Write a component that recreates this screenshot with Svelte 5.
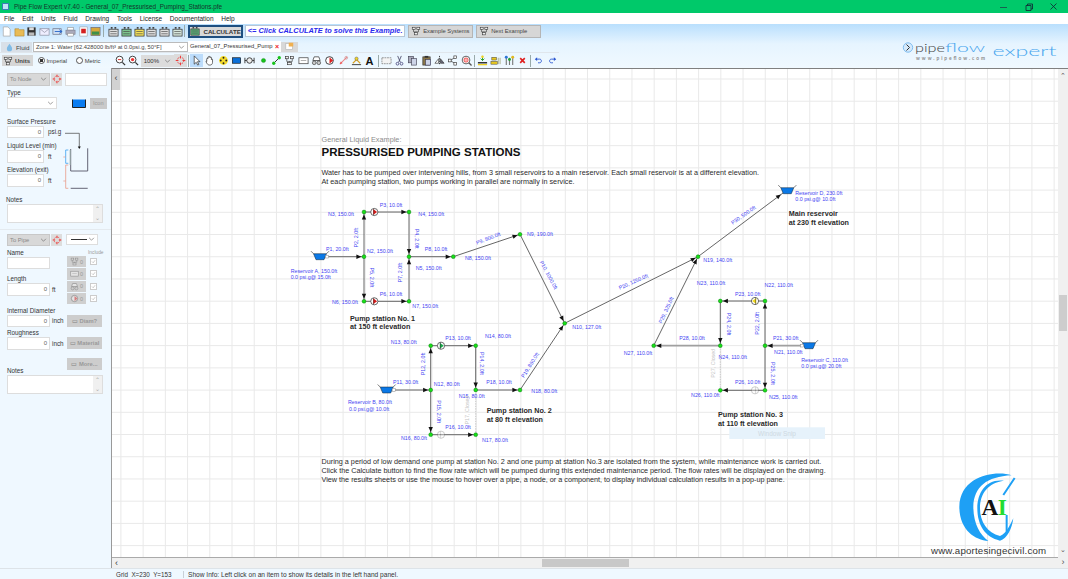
<script>
  const I = {
    page: '<path d="M2.5 1h5l2.5 2.5V11h-7.5z" fill="#fff" stroke="#aaa" stroke-width=".8"/>',
    open: '<path d="M1 3h4l1 1h5v7H1z" fill="#e9bb55" stroke="#a9802c" stroke-width=".6"/>',
    save: '<rect x="1.5" y="1.5" width="9" height="9" fill="#333"/><rect x="3.5" y="1.5" width="5" height="3" fill="#ddd"/><rect x="3" y="7" width="6" height="3.5" fill="#bbb"/>',
    mail: '<rect x="1" y="3" width="10" height="7" fill="#eef" stroke="#889" stroke-width=".7"/><path d="M1 3l5 4 5-4" fill="none" stroke="#889" stroke-width=".7"/>',
    imp: '<rect x="1" y="3" width="9" height="6" fill="#cfe0f5" stroke="#667" stroke-width=".7"/><path d="M3 6h8M8 4l3 2-3 2" fill="none" stroke="#2a66c8"/>',
    print: '<rect x="3" y="1.5" width="6" height="3" fill="#fff" stroke="#888" stroke-width=".6"/><rect x="1" y="4.5" width="10" height="4.5" fill="#aab" stroke="#778" stroke-width=".6"/><rect x="3" y="8" width="6" height="3" fill="#fff" stroke="#888" stroke-width=".6"/>',
    pdf: '<rect x="2" y="1" width="8" height="10" fill="#fff" stroke="#999" stroke-width=".6"/><rect x="3.5" y="3" width="5" height="5" fill="#d42020"/>',
    pic: '<rect x="1" y="1.5" width="10" height="9" fill="#d8a83a" stroke="#667" stroke-width=".7"/><rect x="2" y="6" width="8" height="3.5" fill="#3e8f4a"/>',
    zout: '<circle cx="5" cy="5" r="3.7" fill="#fff" stroke="#333"/><path d="M3.2 5h3.6" stroke="#d22"/><path d="M8 8l3 3" stroke="#333" stroke-width="1.4"/>',
    zin: '<circle cx="5" cy="5" r="3.7" fill="#fff" stroke="#333"/><circle cx="5" cy="5" r="1.8" fill="#e33"/><path d="M8 8l3 3" stroke="#333" stroke-width="1.4"/>',
    cross: '<circle cx="6" cy="6" r="3.6" fill="none" stroke="#e33" stroke-dasharray="1.6 1"/><path d="M6 .8v3M6 8.2v3M.8 6h3M8.2 6h3" stroke="#e33"/>',
    arrow: '<path d="M3.5 1v9l2.2-2 1.6 3 1.3-.7-1.6-3h2.8z" fill="#fff" stroke="#222" stroke-width=".7"/>',
    hand: '<path d="M3 7V4.2c0-1 1.2-1 1.2 0V2.6c0-1 1.3-1 1.3 0v-.3c0-1 1.3-1 1.3 0v.6c0-1 1.3-1 1.3 0V5c0-1 1.2-1 1.2 0v3c0 2-1.3 3-3 3-2 0-2.7-1-4-3.4-.4-.9.6-1.3 1-.6z" fill="#fff" stroke="#222" stroke-width=".7"/>',
    hub: '<circle cx="6" cy="6" r="4.8" fill="#f5dc2a"/><circle cx="6" cy="3" r="1" fill="#222"/><circle cx="6" cy="9" r="1" fill="#222"/><circle cx="3" cy="6" r="1" fill="#222"/><circle cx="9" cy="6" r="1" fill="#222"/>',
    tank: '<rect x="1.5" y="3" width="9" height="6" fill="#0a6fd8" stroke="#111" stroke-width=".7"/>',
    valve: '<circle cx="6" cy="6" r="3" fill="#eee" stroke="#333"/><path d="M1 3v6M11 3v6M1 6h2M9 6h2" stroke="#333"/>',
    dot: '<circle cx="6" cy="6" r="2.3" fill="#16c21a" stroke="#0a7a10" stroke-width=".4"/>',
    pipe: '<path d="M3 9l6-6" stroke="#222"/><circle cx="3" cy="9" r="1.8" fill="#16c21a"/><circle cx="9" cy="3" r="1.8" fill="#16c21a"/>',
    grid: '<rect x="1.5" y="1.5" width="3.5" height="2.6" fill="#eee" stroke="#333" stroke-width=".7"/><rect x="7" y="1.5" width="3.5" height="2.6" fill="#eee" stroke="#333" stroke-width=".7"/><path d="M3 4v3h6V4M6 7v1" stroke="#333" stroke-width=".7" fill="none"/><rect x="4" y="8" width="4" height="2.6" fill="#eee" stroke="#333" stroke-width=".7"/>',
    box: '<rect x="1" y="3" width="10" height="6.5" fill="#fff" stroke="#444" stroke-width=".8"/><path d="M3 6h6" stroke="#888" stroke-width=".7"/>',
    car: '<path d="M3.5 2h5l1.5 4H2z" fill="#fff" stroke="#333" stroke-width=".8"/><circle cx="3.5" cy="8.5" r="2" fill="#ccc" stroke="#333" stroke-width=".7"/><circle cx="8.5" cy="8.5" r="2" fill="#ccc" stroke="#333" stroke-width=".7"/>',
    pump: '<circle cx="6" cy="6" r="4.2" fill="#fff" stroke="#222" stroke-width=".9"/><path d="M6 2.5L10 6 6 9.5z" fill="#d22"/>',
    off: '<path d="M2 10l8-8" stroke="#e88" stroke-width="1.2"/><path d="M2 10l3-1-2-2z" fill="#e55"/><circle cx="9" cy="3" r="1.5" fill="none" stroke="#c88" stroke-width=".7"/>',
    fork: '<path d="M2 9l4-4 4 4" fill="none" stroke="#d8a020" stroke-width="1.2"/><circle cx="6" cy="4" r="1.8" fill="#f2d52c" stroke="#555" stroke-width=".5"/><path d="M1 10.5h10" stroke="#333"/>',
    text: '<text x="6" y="10.5" text-anchor="middle" font-family="Liberation Sans" font-weight="700" font-size="12" fill="#111">A</text>',
    marq: '<rect x="1" y="3" width="10" height="6.5" fill="#f3f3f3" stroke="#777" stroke-width=".8" stroke-dasharray="2 .8"/>',
    cut: '<path d="M4 1l3 7M8 1L5 8" stroke="#446" stroke-width=".9"/><circle cx="3.8" cy="9.5" r="1.5" fill="none" stroke="#558"/><circle cx="8.2" cy="9.5" r="1.5" fill="none" stroke="#558"/>',
    copy: '<rect x="1.5" y="1.5" width="5.5" height="7" fill="#aab" stroke="#445" stroke-width=".7"/><rect x="5" y="4" width="5.5" height="7" fill="#cdd4e8" stroke="#445" stroke-width=".7"/>',
    paste: '<rect x="2" y="2" width="8" height="9" fill="#8a7648" stroke="#333" stroke-width=".7"/><rect x="4" y="1" width="4" height="2" fill="#333"/><rect x="5" y="5" width="5.5" height="6" fill="#cdd4e8" stroke="#335" stroke-width=".6"/>',
    flip: '<path d="M6 1v10" stroke="#333" stroke-dasharray="1.5 1"/><path d="M5 4L1 9h4z" fill="#fff" stroke="#333" stroke-width=".7"/><path d="M7 4l4 5H7z" fill="#667" stroke="#333" stroke-width=".7"/>',
    rot: '<path d="M9 2.5L3.5 6 9 9.5" fill="none" stroke="#555" stroke-width=".9"/><rect x="7.5" y="1" width="3" height="3" fill="#fff" stroke="#333" stroke-width=".7"/><rect x="1.5" y="4.5" width="3" height="3" fill="#fff" stroke="#333" stroke-width=".7"/><rect x="7.5" y="8" width="3" height="3" fill="#fff" stroke="#333" stroke-width=".7"/>',
    find: '<circle cx="5.5" cy="5.5" r="4.2" fill="#fff" stroke="#555"/><circle cx="5.5" cy="5.5" r="2.2" fill="none" stroke="#e33"/><circle cx="5.5" cy="5.5" r=".8" fill="#e33"/><path d="M8.5 8.5l3 3" stroke="#555" stroke-width="1.4"/>',
    lift: '<path d="M1 8.5h10" stroke="#111" stroke-width="1.4"/><path d="M1 10.5h10" stroke="#f0d020" stroke-width="1.4"/><path d="M6 1v5M4 4l2 2 2-2" stroke="#1b9a20" fill="none"/><circle cx="6" cy="2" r="1.4" fill="#f0d020"/>',
    bars: '<rect x="1" y="7" width="7" height="3" fill="#e8c820" stroke="#333" stroke-width=".5"/><rect x="2" y="2.5" width="5" height="3" fill="#e8c820" stroke="#333" stroke-width=".5"/><path d="M9 3v7M11 3v7" stroke="#996" stroke-width=".8"/>',
    tree: '<path d="M2.5 3v8M6 3v8M9.5 3v8" stroke="#777" stroke-width="1.2"/><circle cx="2.5" cy="2.5" r="1.6" fill="#2d76d8"/><circle cx="6" cy="5" r="1.6" fill="#20a030"/><circle cx="9.5" cy="2.5" r="1.6" fill="#e0b820"/>',
    del: '<path d="M3.500 3.500l5 5M8.500 3.500l-5 5" stroke="#e02020" stroke-width="1.800"/>',
    undo: '<path d="M3 4.500h4.200c2.600 0 2.600 4 0 4H5.500" fill="none" stroke="#2a55d0" stroke-width="1"/><path d="M4.500 2.500L2 4.500 4.500 6.500z" fill="#2a55d0"/>',
    redo: '<path d="M9 4.500H4.800c-2.600 0-2.600 4 0 4h1.700" fill="none" stroke="#2a55d0" stroke-width="1"/><path d="M7.500 2.500L10 4.500 7.500 6.500z" fill="#2a55d0"/>'
  };
  const sheet = (c) => `<rect x="1" y="3.500" width="10" height="7.500" fill="${c}" stroke="#333" stroke-width=".8"/><path d="M2.500 6h7M2.500 8.500h7" stroke="#444" stroke-width=".7"/><path d="M3 1h2v2H3zM7 1h2v2H7z" fill="#444"/>`;
  const fileIcons = ['page','open','save','mail','imp','print','pdf','pic'];
  const sheets = ['#dedede','#7cc48e','#f3e05a','#dedede','#dedede','#d6e6dc'];
  const toolsA = ['arrow','hand','hub','tank','valve','dot','pipe','grid','box','car','pump','off','fork','text'];
  const toolsB = ['marq','cut','copy','paste','flip','rot','find'];
  const toolsC = ['lift','bars','tree','del'];
  const menus = ['File','Edit','Units','Fluid','Drawing','Tools','License','Documentation','Help'];

  const gridX = Array.from({ length: 43 }, (_, i) => 120.9 + i * 22.22);
  const gridY = Array.from({ length: 22 }, (_, i) => 79 + i * 22.22);

  const n = {
    N2:[364,256.7],N3:[364,212],N4:[409,212],N5:[409,256.7],N6:[364,301.3],N7:[409,301.3],N8:[453.3,256.7],N9:[520,234.3],N10:[564.7,323.3],
    N12:[430.7,390],N13:[430.7,345.7],N14:[475.7,345.7],N15:[475.7,390],N16:[430.7,434.7],N17:[475.7,434.7],N18:[520,390],
    N19:[698,256.7],N21:[765,345.7],N22:[765,301],N23:[720.3,301],N24:[720.3,345.7],N25:[765,390.3],N26:[720.3,390.3],N27:[653.7,345.7]
  };
  const RA=[326,256.7], RB=[393,390], RC=[802,345.7], RD=[783,193];
  const pipes = [
    [RA,n.N2,1],[n.N2,n.N3,0],[n.N3,n.N4,0],[n.N4,n.N5,1],[n.N2,n.N6,0],[n.N6,n.N7,0],[n.N7,n.N5,1],[n.N5,n.N8,1],[n.N8,n.N9,0],[n.N9,n.N10,0],
    [RB,n.N12,0],[n.N12,n.N13,0],[n.N13,n.N14,1],[n.N14,n.N15,0],[n.N12,n.N16,0],[n.N16,n.N17,1],[n.N15,n.N18,0],[n.N18,n.N10,0],
    [n.N10,n.N19,0],[n.N27,n.N19,0],[n.N19,RD,0],
    [RC,n.N21,2],[n.N21,n.N22,0],[n.N22,n.N23,0],[n.N23,n.N24,0],[n.N21,n.N25,0],[n.N25,n.N26,0],[n.N24,n.N27,2]
  ];
  const arrows = pipes.map(([a,b]) => {
    const ang = Math.atan2(b[1]-a[1], b[0]-a[0]);
    return { x: b[0]-Math.cos(ang)*2.6, y: b[1]-Math.sin(ang)*2.6, deg: ang*180/Math.PI };
  });
  const closed = [[n.N17,n.N15],[n.N26,n.N24]];
  const pumps = [
    [374.3,212,'#d81818',0,1],[374.3,301.3,'#d81818',0,1],[441,345.7,'#18a848',0,1],[755,301,'#f2d814',180,1],
    [441,434.7,'#eee',0,.35],[755,390.3,'#eee',180,.35]
  ];
  const tanks = [[320,256.7,1],[386.7,390,1],[809,345.7,-1],[787.3,190.7,0]];

  const labels = [
    ['N3, 150.0ft',341,214],['N4, 150.0ft',431.3,214.3],['P3, 10.0ft',391,204.7],['P2, 2.0ft',355.7,237.7,-90],['N2, 150.0ft',380,251],
    ['P4, 2.0ft',417,238.7,90],['P1, 20.0ft',337.3,249],['P8, 10.0ft',436,249],['P9, 800.0ft',488.3,238.3,-21],['N9, 190.0ft',540,234.3],
    ['N8, 150.0ft',478,258],['N5, 150.0ft',428.7,268],['P7, 2.0ft',399.7,272.7,-90],['P5, 2.0ft',372,277.3,90],['N6, 150.0ft',345,301.7],
    ['P6, 10.0ft',391,293.7],['N7, 150.0ft',425.3,305.7],['P10, 1000.0ft',548.7,275,62],['N10, 127.0ft',586.7,327],
    ['N13, 80.0ft',403.7,342.3],['P13, 10.0ft',458,338.3],['N14, 80.0ft',498,336],['P12, 2.0ft',423.3,364,-90],['P14, 2.0ft',482.3,363.3,90],
    ['P11, 30.0ft',405.7,382.3],['N12, 80.0ft',446.7,384],['P18, 10.0ft',499,382.3],['N18, 80.0ft',544.3,390.7],['P19, 860.0ft',530,365,-58],
    ['N15, 80.0ft',471.7,396.3],['P15, 2.0ft',439.3,411.7,90],['N16, 80.0ft',414,438.3],['P16, 10.0ft',458,427],['N17, 80.0ft',495,440.3],
    ['P30, 500.0ft',743.3,215,-35],['N19, 140.0ft',717.7,260.3],['P20, 1250.0ft',633.3,281.7,-24],['P29, 325.0ft',666,310,-65],
    ['N23, 110.0ft',711,283.3],['N22, 110.0ft',778.7,285],['P23, 10.0ft',747.7,293.7],['P24, 2.0ft',729,324,90],['P22, 2.0ft',757.3,323.3,-90],
    ['P28, 10.0ft',692,338],['P21, 30.0ft',785.7,338],['N21, 110.0ft',788.3,351.7],['N27, 110.0ft',638,353.3],['N24, 110.0ft',732.7,356.7],
    ['P25, 2.0ft',773.3,373.3,90],['P26, 10.0ft',747.7,382.3],['N26, 110.0ft',705.3,395],['N25, 110.0ft',783.3,396.7]
  ];
  const left = [
    ['Reservoir A, 150.0ft',290.7,270.7],['0.0 psi.g@ 15.0ft',290.7,277],
    ['Reservoir B, 80.0ft',348,402.3],['0.0 psi.g@ 10.0ft',349,408.7],
    ['Reservoir C, 110.0ft',801.3,360],['0.0 psi.g@ 20.0ft',801.3,366],
    ['Reservoir D, 230.0ft',795.3,193],['0.0 psi.g@ 10.0ft',795.3,199.3]
  ];
  const heads = [
    ['Pump station No. 1',350,320.7],['at 150 ft elevation',350,329.3],
    ['Pump station No. 2',486.7,412.7],['at 80 ft elevation',486.7,421.7],
    ['Pump station No. 3',718,416.7],['at 110 ft elevation',718,425.7],
    ['Main reservoir',788.7,216],['at 230 ft elevation',788.7,225]
  ];
  const prose = [
    ['Water has to be pumped over intervening hills, from 3 small reservoirs to a main reservoir. Each small reservoir is at a different elevation.',175],
    ['At each pumping station, two pumps working in parallel are normally in service.',184],
    ['During a period of low demand one pump at station No. 2 and one pump at station No.3 are isolated from the system, while maintenance work is carried out.',464.3],
    ['Click the Calculate button to find the flow rate which will be pumped during this extended maintenance period. The flow rates will be displayed on the drawing.',473],
    ['View the results sheets or use the mouse to hover over a pipe, a node, or a component, to display individual calculation results in a pop-up pane.',481.7]
  ];
  const includeRows = ['grid','box','car','pump'];
</script>

{#snippet icon(name, cls = '')}
  <span class="ic {cls}"><svg viewBox="0 0 12 12" width="11" height="11">{@html I[name]}</svg></span>
{/snippet}
{#snippet field(width, unit)}
  <div class="frow">
    <div class="inp" style="width:{width}px">0</div>
    <span class={width > 40 ? 'unit close' : 'unit'}>{unit}</span>
  </div>
{/snippet}
{#snippet chev()}
  <svg class="chev" viewBox="0 0 8 5" width="7" height="4"><path d="M1 1l3 3 3-3" fill="none" stroke="#666" stroke-width=".8"/></svg>
{/snippet}
{#snippet crossBtn()}
  <span class="crossbtn"><svg viewBox="0 0 12 12" width="10" height="10">{@html I.cross}</svg></span>
{/snippet}
{#snippet notes()}
  <div class="notes">
    <div class="nscroll"><span>⌃</span><span>⌄</span></div>
  </div>
{/snippet}

<div class="app">
  <header class="title">
    <span class="appicon"></span>
    <span class="ttext">Pipe Flow Expert v7.40 - General_07_Pressurised_Pumping_Stations.pfe</span>
    <span class="win">
      <svg viewBox="0 0 10 10" width="10" height="10"><path d="M1 5.500h7" stroke="#234" stroke-width=".7"/></svg>
      <svg viewBox="0 0 10 10" width="10" height="10"><path d="M2 3.500h5v5H2zM3.500 3.500V2h5v5H7" fill="none" stroke="#123" stroke-width=".8"/></svg>
      <svg viewBox="0 0 10 10" width="10" height="10"><path d="M1.500 1.500l6 6M7.500 1.500l-6 6" stroke="#123" stroke-width=".8"/></svg>
    </span>
  </header>
  <nav class="menu">{#each menus as m}<span>{m}</span>{/each}</nav>

  <div class="bars">
    <div class="r1">
      {#each fileIcons as f}{@render icon(f)}{/each}
      <i class="sep first"></i>
      {#each sheets as c}<span class="ic"><svg viewBox="0 0 12 12" width="11" height="11">{@html sheet(c)}</svg></span>{/each}
      <i class="sep"></i>
      <div class="calc"><svg viewBox="0 0 12 12" width="10" height="10">{@html sheet('#5cb07a')}</svg><b>CALCULATE</b></div>
      <div class="hint">&lt;= Click CALCULATE to solve this Example.</div>
      <div class="gbtn wide"><svg viewBox="0 0 12 12" width="10" height="10">{@html I.grid}</svg>Example Systems</div>
      <div class="gbtn"><svg viewBox="0 0 12 12" width="10" height="10">{@html I.grid}</svg>Next Example</div>
    </div>
    <div class="r2">
      <div class="fluid"><svg viewBox="0 0 12 12" width="9" height="9"><path d="M6 1c2 3 3.500 4.500 3.500 6.500a3.500 3.500 0 0 1-7 0C2.500 5.500 4 4 6 1z" fill="#7fbbe6"/></svg>Fluid</div>
      <div class="zone"><span>Zone 1: Water [62.428000 lb/ft³ at 0.0psi.g, 50°F]</span>{@render chev()}</div>
      <div class="tab"><span>General_07_Pressurised_Pump</span><em>×</em></div>
      <div class="tab2"><svg viewBox="0 0 12 12" width="9" height="9"><rect x="1" y="2" width="9" height="8" fill="#fff" stroke="#bbb"/><rect x="5" y="1" width="6" height="5" fill="#f0b050"/></svg></div>
    </div>
    <div class="r3">
      <div class="unitzone">
        <div class="units"><svg viewBox="0 0 12 12" width="10" height="10">{@html I.grid}</svg>Units</div>
        <span class="radio on"></span><span class="rl">Imperial</span>
        <span class="radio metric"></span><span class="rl">Metric</span>
      </div>
      {@render icon('zout')}{@render icon('zin')}
      <div class="pct"><span>100%</span>{@render chev()}</div>
      {@render icon('cross','graybg')}
      <i class="sep"></i>
      {#each toolsA as t, i}{@render icon(t, i === 0 ? 'active' : '')}{/each}
      <i class="sep"></i>
      {#each toolsB as t}{@render icon(t)}{/each}
      <i class="sep"></i>
      {#each toolsC as t}{@render icon(t)}{/each}
      <i class="sep"></i>
      {@render icon('undo')}{@render icon('redo')}
    </div>
    <svg class="logo" viewBox="0 0 160 30" width="160" height="30">
      <circle cx="8" cy="9.500" r="4.700" fill="#d4e9fb" stroke="#7fbdf0" stroke-width="1"/>
      <path d="M6.500 6.500l3 3-3 3" fill="none" stroke="#333" stroke-width="1"/>
      <text x="15" y="13.500" font-size="11" font-weight="300" fill="#444" textLength="30" lengthAdjust="spacingAndGlyphs">pipe</text>
      <text x="45" y="13.500" font-size="11" font-weight="300" fill="#49a6ee" textLength="40" lengthAdjust="spacingAndGlyphs">flow</text>
      <text x="16" y="21.500" font-size="4.800" font-weight="700" fill="#8a8a8a" textLength="69" lengthAdjust="spacing">www.pipeflow.com</text>
      <text x="92.500" y="18" font-size="14" font-weight="300" fill="#49a6ee" textLength="64" lengthAdjust="spacingAndGlyphs">expert</text>
    </svg>
  </div>

  <div class="main">
    <aside class="side">
      <div class="r top">
        <div class="sel gray w43"><span>To Node</span>{@render chev()}</div>
        {@render crossBtn()}
        <div class="blank"></div>
      </div>
      <div class="lbl m3">Type</div>
      <div class="r h12">
        <div class="sel w50">{@render chev()}</div>
        <svg class="tankic" viewBox="0 0 14 9" width="14" height="9"><path d="M.5.500v8h13v-8" fill="#0a7cf0" stroke="#222"/></svg>
        <div class="iconbtn">Icon</div>
      </div>
      <div class="lbl m9">Surface Pressure</div>
      {@render field(37,'psi.g')}
      <div class="lbl m5">Liquid Level (min)</div>
      {@render field(37,'ft')}
      <div class="lbl m4">Elevation (exit)</div>
      {@render field(37,'ft')}
      <div class="lbl m8 shift">Notes</div>
      {@render notes()}
      <hr />
      <div class="r top2">
        <div class="sel gray w43"><span>To Pipe</span>{@render chev()}</div>
        {@render crossBtn()}
        <div class="sel linesel"><i></i>{@render chev()}</div>
      </div>
      <div class="cols">
        <div class="lc">
          <div class="lbl tight">Name</div>
          <div class="inp w43 solo"></div>
          <div class="lbl gapL">Length</div>
          {@render field(43,'ft')}
        </div>
        <div class="rc">
          <div class="incl">Include</div>
          {#each includeRows as k}
            <div class="incrow">
              <span class="incbtn"><svg viewBox="0 0 12 12" width="9" height="9" opacity=".45">{@html I[k]}</svg><small>0</small></span>
              <span class="chk"><svg viewBox="0 0 8 8" width="7" height="7"><path d="M1.500 4l2 2 3-4" fill="none" stroke="#999" stroke-width=".8"/></svg></span>
            </div>
          {/each}
        </div>
      </div>
      <div class="lbl m1">Internal Diameter</div>
      <div class="frow btnrow">
        <div class="inp w43">0</div><span class="unit close">inch</span>
        <div class="graybtn">▭ Diam?</div>
      </div>
      <div class="lbl m2">Roughness</div>
      <div class="frow btnrow">
        <div class="inp w43">0</div><span class="unit close">inch</span>
        <div class="graybtn">▭ Material</div>
      </div>
      <div class="morerow"><div class="graybtn">▭ More...</div></div>
      <div class="lbl notes2">Notes</div>
      {@render notes()}
      <svg class="schem" viewBox="0 0 30 60" width="30" height="60">
        <path d="M5 3.300h14.300V18" fill="none" stroke="#444" stroke-width=".7"/>
        <path d="M17.800 16.500h3L19.300 19z" fill="#111"/>
        <path d="M10.700 19v22h17V18.300" fill="none" stroke="#556" stroke-width=".9"/>
        <path d="M10.200 20v15" stroke="#9aa" stroke-width="1"/>
        <path d="M8.300 20H5.700v13.300h2.600" fill="none" stroke="#3aa0f0" stroke-width=".8"/>
        <path d="M8.300 35H5.700v23.300h2.600" fill="none" stroke="#e89a88" stroke-width=".8"/>
        <path d="M10.700 58.300h17" stroke="#556" stroke-width=".9"/>
        <path d="M3.300 27h2.400M3.300 51h2.400" stroke="#e89a88" stroke-width=".7"/>
      </svg>
    </aside>

    <section class="work">
      <div class="cwrap">
        <svg class="canvas" viewBox="112 69 946 488" width="946" height="488">
          {#each gridX as x}<line class="g" x1={x} y1="69" x2={x} y2="557" />{/each}
          {#each gridY as y}<line class="g" x1="112" y1={y} x2="1058" y2={y} />{/each}

          {#each prose as p}<text class="prose" x="321.500" y={p[1]}>{p[0]}</text>{/each}
          <text class="kicker" x="321.500" y="141.500">General Liquid Example:</text>
          <text class="head" x="321.500" y="155.500">PRESSURISED PUMPING STATIONS</text>

          {#each closed as c}<line class="closed" x1={c[0][0]} y1={c[0][1]} x2={c[1][0]} y2={c[1][1]} />{/each}
          {#each pipes as p}<line class={p[2] === 2 ? 'pipe big' : p[2] === 1 ? 'pipe mid' : 'pipe'} x1={p[0][0]} y1={p[0][1]} x2={p[1][0]} y2={p[1][1]} />{/each}
          {#each arrows as a}<polygon class="arr" points="-5,-2.200 0,0 -5,2.200" transform="translate({a.x} {a.y}) rotate({a.deg})" />{/each}
          {#each Object.values(n) as p}<circle class="node" cx={p[0]} cy={p[1]} r="1.900" />{/each}

          {#each pumps as p}
            <g transform="translate({p[0]} {p[1]}) rotate({p[3]})" opacity={p[4]}>
              <circle r="3.600" fill="#fff" stroke="#333" stroke-width=".7" />
              <path d="M-1.200-3L2.800 0-1.200 3z" fill={p[2]} />
              <path d="M-.6-3.500V3.500" stroke="#333" stroke-width=".5" />
            </g>
          {/each}
          {#each tanks as t}
            <g transform="translate({t[0]} {t[1]})">
              <path d="M-6.500-3H6.500L4 3H-4z" fill="#0a78e6" stroke="#123" stroke-width=".5" />
              <path d="M-9-5.500L-6.500-3M9-5.500L6.500-3" stroke="#222" stroke-width=".6" />
              {#if t[2] !== 0}
                <rect x={t[2] > 0 ? 5.500 : -8.500} y="-1.300" width="3" height="2.600" fill="#fff" stroke="#888" stroke-width=".5" />
              {/if}
            </g>
          {/each}

          {#each labels as l}
            <text class="lab mid" transform="translate({l[1]} {l[2]}) rotate({l[3] ?? 0})" dy="1.900">{l[0]}</text>
          {/each}
          {#each left as l}<text class="lab" x={l[1]} y={l[2]} dy="1.900">{l[0]}</text>{/each}
          <text class="lab mid closedt" transform="translate(467.300 410) rotate(-90)" dy="1.900">P17, Closed</text>
          <text class="lab mid closedt" transform="translate(712.700 363.300) rotate(-90)" dy="1.900">P27, Closed</text>
          {#each heads as h}<text class="hd" x={h[1]} y={h[2]}>{h[0]}</text>{/each}

          <rect x="729.300" y="427.300" width="95.700" height="11.700" fill="#e6f2fb" />
          <text class="snip" x="777" y="435.500">Window Snip</text>

          <g transform="translate(900 450) scale(.3333)">
            <path fill="#1ea0f5" d="M335 76C290 60 180 75 178 170C178 240 225 270 265 273C240 255 220 220 220 170C222 110 260 80 335 76Z" />
            <path fill="#1ea0f5" d="M312 92C260 85 232 125 232 175C232 225 255 262 300 272C322 266 336 235 340 205C330 225 320 250 300 258C262 250 240 215 240 175C240 130 265 98 312 92Z" />
            <path fill="none" stroke="#1ea0f5" stroke-width="6" d="M344 84L310 135M320 195V245" />
            <text class="wa" x="270" y="195">A</text>
            <text class="wi" x="307" y="195">I</text>
          </g>
          <text class="wurl" x="931" y="554">www.aportesingecivil.com</text>
        </svg>
        <div class="collapse">‹</div>
      </div>
      <div class="vscroll"><span>⌃</span><i></i><span>⌄</span></div>
      <div class="hscroll"><span>‹</span><i></i></div>
      <div class="corner">›</div>
    </section>
  </div>

  <footer class="status">
    <span class="s1">Grid&nbsp; X=230&nbsp; Y=153</span>
    <span class="s2">Show Info: Left click on an item to show its details in the left hand panel.</span>
  </footer>
</div>

<style>
  :global(body) { margin: 0; background: #fff; overflow: hidden; }
  .app { width: 1068px; height: 579px; display: flex; flex-direction: column; font-family: "Liberation Sans", Arial, sans-serif; color: #222; position: relative; overflow: hidden; }
  .title { height: 13px; background: #00c96a; display: flex; align-items: center; font-size: 6.400px; color: #16352a; flex: none; }
  .appicon { width: 7px; height: 7px; margin: 0 5px 0 2px; background: #bfe3f7; border: 1px solid #3b7fb4; box-sizing: border-box; flex: none; }
  .win { margin-left: auto; display: flex; gap: 15px; padding-right: 9px; }
  .menu { height: 11px; display: flex; gap: 7.700px; padding-left: 4px; font-size: 6.500px; align-items: center; flex: none; color: #222; background: #fff; }
  .bars { height: 44px; flex: none; background: linear-gradient(#b9dffd, #e6f4ff 45%, #f0f9ff); position: relative; }
  .ic { width: 13.330px; height: 13px; flex: none; display: flex; align-items: center; justify-content: center; }
  .sep { width: 1px; height: 12px; margin: 0 1px; background: #9aa; flex: none; }
  .r1 { height: 14px; display: flex; align-items: center; }
  .r1 .ic { width: 12.800px; }
  .r1 .sep { margin: 0 3.200px 0 .6px; }
  .r1 .sep ~ .sep { margin: 0 3px 0 .2px; }
  .calc { width: 55px; height: 13px; box-sizing: border-box; border: 2px solid #1f4f80; background: #d9d9d9; display: flex; align-items: center; justify-content: center; gap: 3px; font-size: 6.200px; color: #333; }
  .hint { width: 160px; height: 12px; margin: 0 3px 0 2px; box-sizing: border-box; background: #fff; border: 1px solid #b7c6d6; color: #2a2aee; font: italic 700 7.400px/10px "Liberation Sans", sans-serif; text-align: center; white-space: nowrap; }
  .gbtn { width: 65px; height: 13px; box-sizing: border-box; background: #d6d6d6; border: 1px solid #b5b5b5; font-size: 5.800px; color: #444; display: flex; align-items: center; gap: 2px; padding-left: 2px; margin-right: 3px; }
  .r2 { height: 14px; display: flex; align-items: flex-end; padding-left: 1px; }
  .fluid { width: 31px; height: 10px; box-sizing: border-box; background: #d9e0e8; display: flex; align-items: center; gap: 2px; font-size: 6.200px; padding-left: 4px; color: #444; }
  .zone { width: 155px; height: 10.500px; margin-left: 1px; box-sizing: border-box; background: #fff; border: 1px solid #bbb; display: flex; align-items: center; justify-content: space-between; padding: 0 2px; font-size: 5.800px; color: #444; white-space: nowrap; }
  .tab { width: 93px; height: 11.500px; box-sizing: border-box; background: #fff; display: flex; justify-content: space-between; align-items: center; padding: 0 2px; font-size: 5.800px; color: #333; white-space: nowrap; }
  .tab em { color: #e22; font-style: normal; font-weight: 700; font-size: 7px; }
  .tab2 { width: 17px; height: 10.500px; background: #d8d8d8; display: flex; align-items: center; justify-content: center; }
  .r3 { height: 16px; display: flex; align-items: center; border-top: 1px solid #e0e6ec; width: 559px; box-sizing: border-box; }
  .unitzone { width: 114px; flex: none; display: flex; align-items: center; font-size: 5.800px; color: #444; }
  .units { width: 31px; height: 11px; margin: 0 5px 0 2px; background: #d6d6d6; display: flex; align-items: center; gap: 2px; font-weight: 700; font-size: 6px; padding-left: 1px; box-sizing: border-box; }
  .radio { width: 7px; height: 7px; border-radius: 50%; border: 1px solid #555; box-sizing: border-box; background: #fff; flex: none; margin-right: 1.500px; }
  .radio.on { background: radial-gradient(#333 0 1.700px, #fff 2px); }
  .radio.metric { margin-left: 9px; }
  .pct { width: 33px; height: 12px; box-sizing: border-box; background: #dcdcdc; display: flex; justify-content: space-between; align-items: center; font-size: 6px; padding: 0 3px; flex: none; color: #333; }
  .active { background: #bcdcfb; }
  .graybg { background: #dcdcdc; }
  .logo { position: absolute; left: 900px; top: 14px; font-family: "Lato", sans-serif; }

  .main { height: 500px; display: flex; flex: none; }
  .side { width: 112px; box-sizing: border-box; flex: none; background: #eff8ff; border-right: 1px solid #999; padding-top: 5px; position: relative; font-size: 6.300px; }
  .r { display: flex; align-items: stretch; margin-left: 7px; }
  .top, .top2 { height: 12.500px; }
  .h12 { height: 12px; }
  .sel { box-sizing: border-box; background: #fff; border: 1px solid #ddd; display: flex; align-items: center; justify-content: flex-end; padding: 0 2px; font-size: 5.800px; color: #888; }
  .sel span { margin-right: auto; }
  .sel.gray { background: #d8d8d8; border-color: #c8c8c8; }
  .w43 { width: 43px; }
  .w50 { width: 50px; }
  .crossbtn { width: 11px; margin-left: 1px; background: #ddd; display: flex; align-items: center; justify-content: center; }
  .blank { width: 42px; margin-left: 3px; background: #fff; border: 1px solid #ddd; box-sizing: border-box; }
  .lbl { margin-left: 7px; height: 8px; line-height: 8px; color: #333; font-size: 6.300px; }
  .m3 { margin-top: 3px; }
  .m9 { margin-top: 9px; }
  .m5 { margin-top: 4px; }
  .m4 { margin-top: 3.500px; }
  .m8 { margin-top: 9px; }
  .m1 { margin-top: 1px; }
  .m2 { margin-top: 2px; }
  .shift { margin-left: 6px; }
  .tankic { margin: 2.500px 0 0 15px; }
  .iconbtn { width: 16.500px; height: 11px; margin: 1.500px 0 0 4px; background: #c9c9c9; color: #999; text-align: center; line-height: 11px; font-size: 5.600px; }
  .frow { height: 12.500px; display: flex; align-items: center; margin-left: 7px; }
  .inp { height: 12.500px; box-sizing: border-box; background: #fff; border: 1px solid #ddd; text-align: right; padding-right: 2px; line-height: 10.500px; font-size: 6px; color: #666; }
  .unit { margin-left: 4px; font-size: 6.300px; color: #333; }
  .unit.close { margin-left: 2px; }
  .notes { margin-left: 7px; width: 95.500px; height: 19px; background: #fff; border: 1px solid #ddd; box-sizing: border-box; display: flex; justify-content: flex-end; }
  .nscroll { width: 9px; background: #f0f0f0; display: flex; flex-direction: column; align-items: center; justify-content: space-between; font-size: 5.500px; line-height: 8px; color: #aaa; }
  hr { border: 0; border-top: 1px solid #e4eaef; margin: 6.500px 0 3.500px; }
  .linesel { width: 32px; margin-left: 4px; height: 11px; justify-content: space-between; }
  .linesel i { width: 16px; height: 1px; background: #333; margin-left: 2px; }
  .cols { display: flex; height: 57px; margin-top: 2.500px; }
  .lc { width: 67px; flex: none; }
  .tight { height: 8px; }
  .solo { margin-left: 7px; }
  .gapL { margin-top: 6px; }
  .rc { width: 40px; }
  .incl { font-size: 4.800px; color: #999; margin-left: 21px; height: 7px; line-height: 7px; white-space: nowrap; }
  .incrow { display: flex; height: 12.300px; align-items: center; gap: 4px; }
  .incbtn { width: 19px; height: 11.300px; background: #cfcfcf; display: flex; align-items: center; justify-content: center; gap: 1px; }
  .incbtn small { font-size: 5.500px; color: #999; }
  .chk { width: 7px; height: 7px; background: #fff; border: 1px solid #ccc; display: flex; align-items: center; justify-content: center; box-sizing: border-box; }
  .btnrow { position: relative; }
  .graybtn { width: 35px; height: 12px; background: #cdcdcd; color: #999; font-size: 5.800px; line-height: 12px; text-align: center; font-weight: 700; white-space: nowrap; }
  .btnrow .graybtn { position: absolute; left: 60px; top: 0; }
  .morerow { margin: 8.500px 0 0 67px; height: 12px; }
  .notes2 { margin-top: -3px; height: 8px; }
  .schem { position: absolute; left: 60px; top: 62px; }

  .work { flex: 1; display: grid; grid-template-columns: 946px 10px; grid-template-rows: 488px 11px; border-top: 1px solid #808080; box-sizing: border-box; min-width: 0; }
  .cwrap { position: relative; height: 488px; overflow: hidden; background: #fff; }
  .canvas { display: block; font-family: "Liberation Sans", Arial, sans-serif; }
  .g { stroke: #e9e9e9; stroke-width: 1; }
  .prose { font-size: 7.240px; fill: #2b2b2b; }
  .kicker { font-size: 7.300px; fill: #8c8c8c; }
  .head { font-size: 11.500px; font-weight: 700; fill: #111; }
  .pipe { stroke: #555; stroke-width: .9; }
  .pipe.mid { stroke: #808080; stroke-width: 1.200; }
  .pipe.big { stroke: #a0a0a0; stroke-width: 1.800; }
  .closed { stroke: #bbb; stroke-width: .8; stroke-dasharray: 1.500 1; }
  .arr { fill: #111; }
  .node { fill: #18e018; stroke: #0a7a10; stroke-width: .5; }
  .lab { font-size: 5.300px; fill: #4444f2; }
  .mid { text-anchor: middle; }
  .closedt { fill: #c4c4c4; }
  .hd { font-size: 7.200px; font-weight: 700; fill: #2a2a2a; }
  .snip { font-size: 6.500px; fill: #ced9e2; text-anchor: middle; }
  .wa { font: 700 70px "Liberation Serif", serif; fill: #111; text-anchor: middle; }
  .wi { font: 700 70px "Liberation Serif", serif; fill: #22dd33; text-anchor: middle; }
  .wurl { font-size: 9.700px; fill: #333; letter-spacing: .18px; }
  .collapse { position: absolute; left: 0; top: 0; width: 8px; height: 21px; background: #d2d2d2; color: #444; font-size: 9px; line-height: 19px; text-align: center; }
  .vscroll { background: #f0f0f0; display: flex; flex-direction: column; align-items: center; justify-content: space-between; font-size: 7px; line-height: 8px; color: #555; position: relative; padding: 3px 0; box-sizing: border-box; }
  .vscroll i { position: absolute; top: 226px; left: 1px; right: 1px; height: 36px; background: #cdcdcd; }
  .hscroll { background: #f0f0f0; position: relative; font-size: 9px; line-height: 10px; color: #333; padding-left: 3px; border-top: 1px solid #aaa; box-sizing: border-box; }
  .hscroll i { position: absolute; left: 430px; top: 1px; width: 87px; height: 8px; background: #c8c8c8; }
  .corner { background: #f0f0f0; font-size: 9px; line-height: 10px; text-align: center; color: #555; }
  .status { height: 11px; flex: none; background: #eff8ff; display: flex; align-items: center; padding-left: 116px; font-size: 6.300px; color: #333; white-space: nowrap; border-top: 1px solid #dde3e8; box-sizing: border-box; }
  .s1 { width: 67px; border-right: 1px solid #c8d0d8; margin-right: 4px; }
  .s2 { font-size: 6.600px; }
</style>
